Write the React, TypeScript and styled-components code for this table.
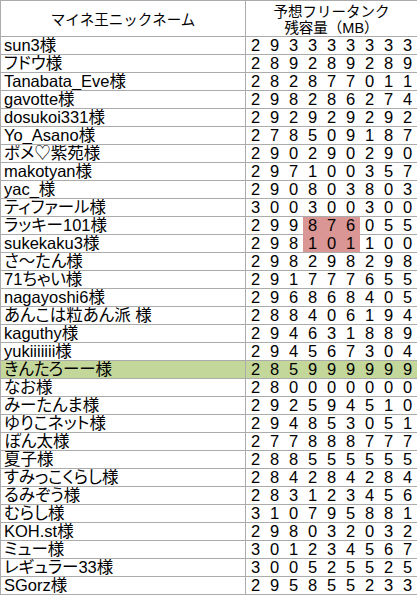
import styled, { createGlobalStyle } from "styled-components";

const GlobalStyle = createGlobalStyle`
  html, body {
    margin: 0;
    padding: 0;
    background: #ffffff;
    overflow: hidden;
  }
`;

const LINE = "#ababab";

const Sheet = styled.div`
  display: grid;
  grid-template-columns: 245px 172px;
  grid-auto-rows: 18px;
  border-top: 1px solid ${LINE};
  border-left: 1px solid ${LINE};
  width: 417px;
  font-family: "Liberation Sans", "Noto Sans CJK JP", sans-serif;
  color: #000;
`;

const HeadCell = styled.div`
  grid-row: span 2;
  display: flex;
  flex-direction: column;
  align-items: center;
  justify-content: center;
  padding-top: 2px;
  border-right: 1px solid ${LINE};
  border-bottom: 1px solid ${LINE};
  font-size: 14.5px;
  line-height: 16px;
`;

const NameCell = styled.div<{ $green?: boolean }>`
  display: flex;
  align-items: center;
  padding-left: 3px;
  border-right: 1px solid ${LINE};
  border-bottom: 1px solid ${LINE};
  background: ${(p) => (p.$green ? "#c4d79b" : "transparent")};
  font-size: 16.5px;
  line-height: 17px;
  white-space: nowrap;
  overflow: hidden;
  font-feature-settings: "palt";
`;

const NumberCell = styled.div<{ $green?: boolean }>`
  display: grid;
  grid-template-columns: repeat(9, 19px);
  background: ${(p) => (p.$green ? "#c4d79b" : "transparent")};
`;

const Digit = styled.span<{ $hl?: boolean; $joinBelow?: boolean }>`
  display: flex;
  align-items: center;
  justify-content: center;
  font-size: 16.5px;
  line-height: 17px;
  background: ${(p) => (p.$hl ? "#d99694" : "transparent")};
  border-bottom: 1px solid ${(p) => (p.$joinBelow ? "#d99694" : LINE)};
`;

interface IEntry {
  name: string;
  value: string;
}

const entries: IEntry[] = [
  { name: "sun3様", value: "293333333" },
  { name: "フドウ様", value: "289289289" },
  { name: "Tanabata_Eve様", value: "282877011" },
  { name: "gavotte様", value: "298286274" },
  { name: "dosukoi331様", value: "292929292" },
  { name: "Yo_Asano様", value: "278509187" },
  { name: "ポメ♡紫苑様", value: "290290290" },
  { name: "makotyan様", value: "297100357" },
  { name: "yac_様", value: "290803803" },
  { name: "ティファール様", value: "300300300" },
  { name: "ラッキー101様", value: "299876055" },
  { name: "sukekaku3様", value: "298101100" },
  { name: "さ〜たん様", value: "298298298" },
  { name: "71ちゃい様", value: "291777655" },
  { name: "nagayoshi6様", value: "296868405" },
  { name: "あんこは粒あん派 様", value: "288406194" },
  { name: "kaguthy様", value: "294631889" },
  { name: "yukiiiiiii様", value: "294567304" },
  { name: "きんたろーー様", value: "285999999" },
  { name: "なお様", value: "280000000" },
  { name: "みーたんま様", value: "292594510" },
  { name: "ゆりこネット様", value: "294853051" },
  { name: "ぽん太様", value: "277888777" },
  { name: "夏子様", value: "288555555" },
  { name: "すみっこくらし様", value: "284284284" },
  { name: "るみぞう様", value: "283123456" },
  { name: "むらし様", value: "310795881" },
  { name: "KOH.st様", value: "298032032" },
  { name: "ミュー様", value: "301234567" },
  { name: "レギュラー33様", value: "300525525" },
  { name: "SGorz様", value: "295855233" },
];

// rows whose digits 4-6 are filled red (ラッキー101 / sukekaku3)
const HL_ROWS = [10, 11];
const GREEN_ROW = 18;

export default function App() {
  return (
    <>
      <GlobalStyle />
      <Sheet>
        <HeadCell>マイネ王ニックネーム</HeadCell>
        <HeadCell>
          <span>予想フリータンク</span>
          <span>残容量（MB）</span>
        </HeadCell>
        {entries.map((e, row) => {
          const green = row === GREEN_ROW;
          return [
            <NameCell key={`n${row}`} $green={green}>
              {e.name}
            </NameCell>,
            <NumberCell key={`v${row}`} $green={green}>
              {e.value.split("").map((d, i) => {
                const hl = HL_ROWS.includes(row) && i >= 3 && i <= 5;
                return (
                  <Digit
                    key={i}
                    $hl={hl}
                    $joinBelow={hl && HL_ROWS.includes(row + 1)}
                  >
                    {d}
                  </Digit>
                );
              })}
            </NumberCell>,
          ];
        })}
      </Sheet>
    </>
  );
}
